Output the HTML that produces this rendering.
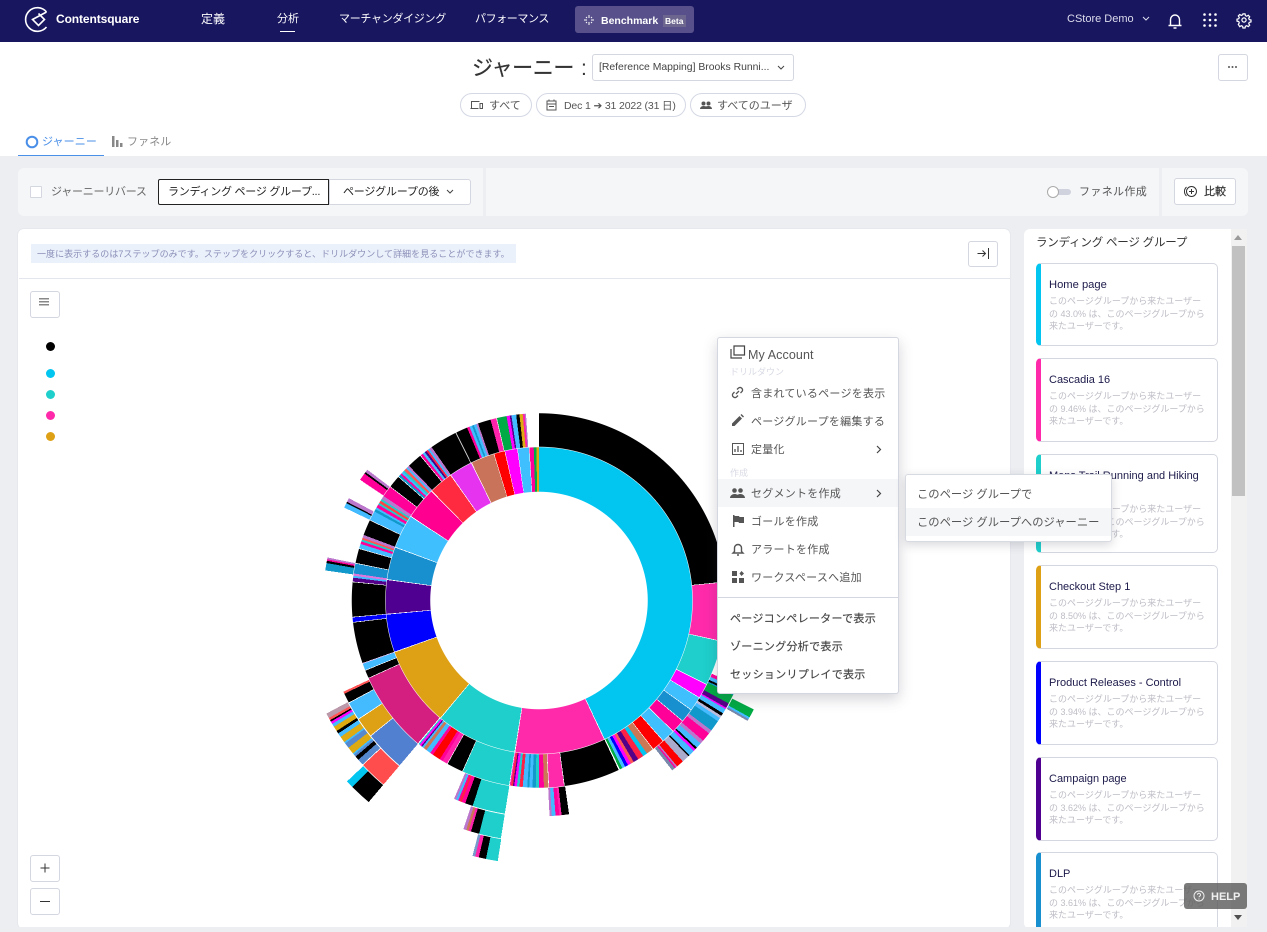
<!DOCTYPE html>
<html lang="ja"><head><meta charset="utf-8"><title>ジャーニー</title>
<style>
html,body{margin:0;padding:0;width:1267px;height:932px;overflow:hidden;background:#eceef2}
body{position:relative;font-family:"Liberation Sans","Noto Sans CJK JP",sans-serif;color:#444}
.a,.t{position:absolute}
.t{white-space:nowrap;line-height:16px}
.t,.mi,.mb,.card b,.card p{transform:translateY(1px)}
.btn{position:absolute;box-sizing:border-box;background:#fff;border:1px solid #d4d6e0;border-radius:3px}
.pill{position:absolute;box-sizing:border-box;top:93px;height:24px;background:#fff;border:1px solid #d4d8e4;border-radius:12px}
.nav{color:#fff;font-size:12px;top:10px}
.ring{position:absolute;border-radius:50%;transform:translateY(-.5px)}
.dot{position:absolute;left:46px;width:9px;height:9px;border-radius:50%}
.card{position:absolute;left:1036px;width:182px;box-sizing:border-box;background:#fff;border:1px solid #d4d6e0;border-left-width:5px;border-radius:5px}
.card b{position:absolute;left:8px;top:13px;font-weight:400;font-size:11px;line-height:14px;color:#1c1a4a;white-space:nowrap}
.card p{position:absolute;left:8px;margin:0;font-size:9px;line-height:12.5px;color:#bdbdc6;white-space:nowrap}
.mi{position:absolute;left:751px;font-size:11px;line-height:16px;color:#555;white-space:nowrap;letter-spacing:.25px}
.mb{position:absolute;left:730px;font-size:11px;line-height:16px;color:#444;white-space:nowrap;-webkit-text-stroke:.15px #444;letter-spacing:.3px}
svg{position:absolute;overflow:visible}
</style></head><body>

<!-- top nav -->
<div class="a" style="left:0;top:0;width:1267px;height:42px;background:#191660"></div>
<svg style="left:0;top:0" width="60" height="42" fill="none" stroke="#fff" stroke-width="1.6"><path d="M46.500 12A11.800 11.800 0 1 0 46.500 27"/><path d="M46.500 12L32.500 19.500 38.500 25.500 44.500 19.500 38.500 13.500"/></svg>
<div class="t" style="left:56px;top:10px;color:#fff;font-size:12px;font-weight:700;letter-spacing:-.1px">Contentsquare</div>
<div class="t nav" style="left:201px">定義</div>
<div class="t nav" style="left:277px;font-size:11px">分析</div>
<div class="a" style="left:280px;top:31px;width:15px;height:1px;background:#fff"></div>
<div class="t nav" style="left:339px;font-size:11px;letter-spacing:-.3px">マーチャンダイジング</div>
<div class="t nav" style="left:475px;font-size:11px;letter-spacing:-.4px">パフォーマンス</div>
<div class="a" style="left:575px;top:6px;width:119px;height:27px;background:#57508a;border-radius:3px"></div>
<svg style="left:583px;top:14px" width="12" height="12" stroke="#fff" stroke-width="1"><path d="M6 1v3M6 8v3M1 6h3M8 6h3M3 3l1 1M8 8l1 1M9 3L8 4M4 8L3 9"/></svg>
<div class="t" style="left:601px;top:12px;color:#fff;font-size:10.500px;font-weight:700">Benchmark</div>
<div class="a" style="left:663px;top:15px;width:23px;height:12px;background:#6d678f"></div>
<div class="t" style="left:665px;top:13px;color:#fff;font-size:8.5px;font-weight:700;line-height:14px">Beta</div>
<div class="t" style="left:1067px;top:10px;color:#dcdcec;font-size:11px">CStore Demo</div>
<svg style="left:1142px;top:16px" width="8" height="6" fill="none" stroke="#dcdcec"><path d="M1 1l3 3 3-3"/></svg>
<svg style="left:1167px;top:12px" width="16" height="18" fill="none" stroke="#fff" stroke-width="1.4"><path d="M3.500 13V7.500a4.500 4.500 0 0 1 9 0V13M1.500 13.500h13M6.500 16h3"/></svg>
<svg style="left:1203px;top:13px" width="14" height="14" fill="#fff"><circle cx="1.500" cy="1.500" r="1.300"/><circle cx="7" cy="1.500" r="1.300"/><circle cx="12.500" cy="1.500" r="1.300"/><circle cx="1.500" cy="7" r="1.300"/><circle cx="7" cy="7" r="1.300"/><circle cx="12.500" cy="7" r="1.300"/><circle cx="1.500" cy="12.500" r="1.300"/><circle cx="7" cy="12.500" r="1.300"/><circle cx="12.500" cy="12.500" r="1.300"/></svg>
<svg style="left:1237px;top:13px" width="14" height="14" viewBox="0 0 16 16" fill="none" stroke="#fff" stroke-width="1.4"><circle cx="8" cy="8" r="2.400"/><path d="M6.800 1h2.400l.4 2 1.500.7 1.800-1.100 1.600 1.700-1.100 1.700.6 1.500 2 .5v2.200l-2 .5-.6 1.500 1.100 1.700-1.600 1.700-1.800-1.100-1.500.7-.4 2H6.800l-.4-2-1.500-.7-1.800 1.100L1.500 13l1.100-1.700L2 9.800 0 9.300V7.100l2-.5.6-1.500L1.500 3.400l1.600-1.700 1.800 1.100 1.500-.7z"/></svg>

<!-- header -->
<div class="a" style="left:0;top:42px;width:1267px;height:114px;background:#fff"></div>
<div class="t" style="left:472px;top:54px;font-size:21px;line-height:28px;color:#333;-webkit-text-stroke:.2px #333;letter-spacing:-.4px">ジャーニー</div>
<div class="t" style="left:581px;top:54px;font-size:21px;line-height:28px;color:#333">:</div>
<div class="btn" style="left:592px;top:54px;width:202px;height:27px"></div>
<div class="t" style="left:599px;top:59px;font-size:10.400px;color:#444">[Reference Mapping] Brooks Runni...</div>
<svg style="left:777px;top:65px" width="8" height="6" fill="none" stroke="#444"><path d="M1 1l3 3 3-3"/></svg>
<div class="btn" style="left:1218px;top:54px;width:30px;height:27px"></div>
<svg style="left:1228px;top:66px" width="10" height="3" fill="#555"><circle cx="1" cy="1" r="1"/><circle cx="4.500" cy="1" r="1"/><circle cx="8" cy="1" r="1"/></svg>

<div class="pill" style="left:460px;width:72px"></div>
<svg style="left:470px;top:100px" width="13" height="10" fill="none" stroke="#555"><path d="M1.500 8V1.500h8M.5 8.500h8M10 3.500h2.500v5H10z"/></svg>
<div class="t" style="left:489px;top:97px;font-size:11px;color:#555">すべて</div>
<div class="pill" style="left:536px;width:150px"></div>
<svg style="left:546px;top:99px" width="11" height="12" fill="none" stroke="#555"><path d="M1 2h9v9H1zM1 5h9M3 .5v2M8 .5v2M3 7.500h5"/></svg>
<div class="t" style="left:564px;top:97px;font-size:10.500px;color:#555;letter-spacing:-.15px">Dec 1 ➔ 31 2022 (31 日)</div>
<div class="pill" style="left:690px;width:116px"></div>
<svg style="left:700px;top:101px" width="12" height="9" fill="#555"><circle cx="3.500" cy="2.500" r="2"/><circle cx="8.500" cy="2.500" r="2"/><path d="M0 8c0-2 2-3 3.500-3S6 5.500 6 5.500 7 5 8.500 5 12 6 12 8z"/></svg>
<div class="t" style="left:717px;top:97px;font-size:11px;color:#555">すべてのユーザ</div>

<svg style="left:25px;top:135px" width="14" height="14" fill="none"><circle cx="7" cy="7" r="5.300" stroke="#4a8fe8" stroke-width="2"/></svg>
<div class="t" style="left:42px;top:133px;font-size:11px;color:#4a8fe8;letter-spacing:.1px">ジャーニー</div>
<div class="a" style="left:18px;top:155px;width:86px;height:1px;background:#4a8fe8"></div>
<svg style="left:112px;top:136px" width="11" height="12" fill="#888"><path d="M0 0h2.500v11H0zM4 4h2.500v7H4zM8 7h2.500v4H8z"/></svg>
<div class="t" style="left:127px;top:133px;font-size:11px;color:#8a8a8a;letter-spacing:.1px">ファネル</div>

<!-- toolbar -->
<div class="a" style="left:18px;top:168px;width:1230px;height:48px;background:#f5f6f8;border-radius:6px"></div>
<div class="a" style="left:483px;top:168px;width:3px;height:48px;background:#eceef2"></div>
<div class="a" style="left:1159px;top:168px;width:3px;height:48px;background:#eceef2"></div>
<div class="a" style="left:30px;top:186px;width:10px;height:10px;border:1px solid #d4d6e0;background:#fff;border-radius:1px"></div>
<div class="t" style="left:51px;top:183px;font-size:11px;color:#666;letter-spacing:-.25px">ジャーニーリバース</div>
<div class="btn" style="left:329px;top:179px;width:142px;height:26px;border-radius:0 3px 3px 0"></div>
<div class="btn" style="left:158px;top:179px;width:171px;height:26px;border-color:#222;border-radius:2px 0 0 2px"></div>
<div class="t" style="left:168px;top:183px;font-size:11px;color:#222;letter-spacing:-.25px">ランディング ページ グループ...</div>
<div class="t" style="left:343px;top:183px;font-size:11px;color:#222;letter-spacing:-.2px">ページグループの後</div>
<svg style="left:446px;top:189px" width="8" height="6" fill="none" stroke="#444"><path d="M1 1l3 3 3-3"/></svg>
<div class="a" style="left:1052px;top:189px;width:19px;height:6px;background:#d0d3de;border-radius:3px"></div>
<div class="a" style="left:1047px;top:186px;width:10px;height:10px;background:#fff;border:1px solid #aaa;border-radius:50%"></div>
<div class="t" style="left:1079px;top:183px;font-size:11px;color:#555;letter-spacing:.35px">ファネル作成</div>
<div class="btn" style="left:1174px;top:178px;width:62px;height:27px"></div>
<svg style="left:1183px;top:185px" width="15" height="13" fill="none" stroke="#333"><circle cx="8.500" cy="6.500" r="5"/><path d="M8.500 4v5M6 6.500h5M3.500 2a6 6 0 0 0 0 9"/></svg>
<div class="t" style="left:1204px;top:183px;font-size:11px;color:#333;-webkit-text-stroke:.2px #333">比較</div>

<!-- clip to bottom of panels -->
<div class="a" style="left:0;top:0;width:1267px;height:927px;overflow:hidden">

<!-- main panel -->
<div class="a" style="left:18px;top:229px;width:992px;height:700px;background:#fff;border-radius:6px;box-shadow:0 0 0 1px #e6e8ee"></div>
<div class="a" style="left:31px;top:244px;width:485px;height:19px;background:#ebf1fb"></div>
<div class="t" style="left:37px;top:245px;font-size:9px;color:#8b8fb8;letter-spacing:.04px">一度に表示するのは7ステップのみです。ステップをクリックすると、ドリルダウンして詳細を見ることができます。</div>
<div class="a" style="left:19px;top:278px;width:991px;height:1px;background:#e4e6ee"></div>
<div class="btn" style="left:968px;top:241px;width:30px;height:26px"></div>
<svg style="left:977px;top:247px" width="13" height="13" fill="none" stroke="#333"><path d="M.5 6.500h8M5.500 3.500l3 3-3 3M11.500 1v11"/></svg>
<div class="btn" style="left:30px;top:291px;width:30px;height:27px"></div>
<svg style="left:39px;top:298px" width="10" height="8" fill="#888"><path d="M0 0h10v1.500H0zM0 3h10v1.500H0zM0 6h10v1.500H0z"/></svg>
<div class="dot" style="top:342px;background:#000"></div>
<div class="dot" style="top:369px;background:#02c5f0"></div>
<div class="dot" style="top:390px;background:#1ecfcb"></div>
<div class="dot" style="top:411px;background:#ff2aaa"></div>
<div class="dot" style="top:432px;background:#dea015"></div>
<div class="btn" style="left:30px;top:855px;width:30px;height:27px"></div>
<svg style="left:40px;top:863px" width="10" height="10" stroke="#333"><path d="M5 .5v9M.5 5h9"/></svg>
<div class="btn" style="left:30px;top:888px;width:30px;height:27px"></div>
<div class="a" style="left:40px;top:901px;width:10px;height:1px;background:#333"></div>

<!-- sunburst -->
<div class="ring" style="left:275px;top:337px;width:528px;height:528px;background:conic-gradient(transparent 0 189deg,#1ecfcb 0 191.6deg,#000 0 193.2deg,#f2a 0 194deg,#79c 0 194.6deg,transparent 0 220.2deg,#000 0 225deg,#02c5f0 0 226.7deg,transparent 0 360deg);-webkit-mask:radial-gradient(circle,transparent 241.3px,#000 241.8px,#000 264px,transparent 264.5px);mask:radial-gradient(circle,transparent 241.3px,#000 241.8px,#000 264px,transparent 264.5px)"></div>
<div class="ring" style="left:298px;top:360px;width:482px;height:482px;background:conic-gradient(transparent 0 116.9deg,#0a4 0 119deg,#4bf 0 119.5deg,#78a 0 120deg,transparent 0 189.1deg,#1ecfcb 0 194.4deg,#000 0 196.4deg,#f2a 0 197deg,#c75 0 197.6deg,#b7c 0 198.3deg,transparent 0 220.2deg,#ff4c4c 0 226.9deg,#fff 0 227.1deg,#58c 0 228.6deg,#000 0 229.6deg,#58c 0 230.2deg,#4bf 0 230.6deg,#da1 0 232.3deg,#58c 0 233.6deg,#4bf 0 234deg,#da1 0 235.5deg,#4bf 0 236.5deg,#000 0 237.2deg,#da1 0 238.4deg,#4bf 0 239.2deg,#f0f 0 239.8deg,#000 0 240.2deg,#f55 0 240.8deg,#b9a 0 242deg,transparent 0 360deg);-webkit-mask:radial-gradient(circle,transparent 216.5px,#000 217px,#000 240.7px,transparent 241.2px);mask:radial-gradient(circle,transparent 216.5px,#000 217px,#000 240.7px,transparent 241.2px)"></div>
<div class="ring" style="left:323px;top:385px;width:432px;height:432px;background:conic-gradient(transparent 0 113deg,#f09 0 114deg,#4bf 0 115deg,#000 0 115.6deg,#19c 0 116deg,#0a4 0 118.5deg,#508 0 119.8deg,#f0f 0 120.2deg,#4bf 0 121.5deg,#000 0 122.3deg,#bbd 0 123deg,#4bf 0 124deg,#19c 0 127deg,#b7c 0 128deg,#f09 0 130.5deg,#b7c 0 131.5deg,#4bf 0 133deg,#000 0 133.5deg,#f0f 0 134.2deg,#4bf 0 135.8deg,#000 0 136.2deg,#aac 0 138.2deg,#f00 0 140.2deg,#b7c 0 140.6deg,#f09 0 141deg,#78a 0 141.9deg,transparent 0 172deg,#000 0 174deg,#f2a 0 174.6deg,#f09 0 175.6deg,#4bf 0 176.6deg,#b7c 0 177.2deg,transparent 0 189.1deg,#1ecfcb 0 197.9deg,#000 0 200deg,#f09 0 201deg,#f24 0 201.6deg,#f09 0 202deg,#4bf 0 202.6deg,#b7c 0 203.2deg,transparent 0 220.2deg,#5280d0 0 231.1deg,#fff 0 231.3deg,#dea015 0 236.6deg,#fff 0 236.8deg,#4bf 0 241.6deg,#fff 0 241.8deg,#000 0 244.4deg,#f55 0 245deg,transparent 0 278deg,#19c 0 280deg,#000 0 280.6deg,#f09 0 281deg,#b7c 0 281.5deg,transparent 0 295.5deg,#4bf 0 296.8deg,#000 0 297.2deg,#b7c 0 298.3deg,transparent 0 304deg,#f09 0 306deg,#000 0 306.5deg,#b7c 0 307.3deg,transparent 0 360deg);-webkit-mask:radial-gradient(circle,transparent 187.5px,#000 188px,#000 215.7px,transparent 216.2px);mask:radial-gradient(circle,transparent 187.5px,#000 188px,#000 215.7px,transparent 216.2px)"></div>
<div class="ring" style="left:351px;top:413px;width:376px;height:376px;background:conic-gradient(#000 0 84.2deg,#fff 0 84.4deg,#ff2aaa 0 102.5deg,#fff 0 102.7deg,#1ecfcb 0 116.5deg,#fff 0 116.7deg,#f0f 0 121.1deg,#fff 0 121.3deg,#40bfff 0 125.6deg,#fff 0 125.8deg,#1890d0 0 129.9deg,#fff 0 130.1deg,#f09 0 134.2deg,#fff 0 134.4deg,#40bfff 0 138.4deg,#fff 0 138.6deg,#f00 0 142.4deg,#fff 0 142.6deg,#c75 0 144.8deg,#02c5f0 0 146.2deg,#f24 0 148deg,#508 0 149.6deg,#f55 0 150.6deg,#f0f 0 151.6deg,#00f 0 152.6deg,#4bf 0 153.6deg,#0a4 0 154.4deg,#fff 0 154.8deg,#000 0 172.1deg,#fff 0 172.3deg,#ff2aaa 0 176.9deg,#fff 0 177.1deg,#c75 0 178.5deg,#f09 0 180deg,#2cc 0 181deg,#19c 0 182deg,#4bf 0 183deg,#19c 0 183.6deg,#4bf 0 185deg,#f24 0 186deg,#2cc 0 186.8deg,#f0f 0 187.6deg,#508 0 188deg,#f24 0 188.6deg,#f2a 0 189deg,#fff 0 189.2deg,#1ecfcb 0 204deg,#fff 0 204.2deg,#000 0 209.2deg,#fff 0 209.4deg,#f2a 0 211deg,#f09 0 212deg,#f00 0 214.5deg,#f09 0 215.5deg,#4bf 0 217deg,#c75 0 218deg,#4bf 0 218.6deg,#508 0 219deg,#f0f 0 219.6deg,#2cc 0 220deg,#fff 0 220.3deg,#d41f80 0 245.4deg,#fff 0 245.6deg,#000 0 248deg,#fff 0 248.2deg,#4bf 0 250.2deg,#d8c0f0 0 250.5deg,#000 0 263.2deg,#fff 0 263.4deg,#00f 0 264.8deg,#fff 0 265deg,#000 0 275.6deg,#fff 0 275.8deg,#508 0 277deg,#4bf 0 277.6deg,#d7d 0 278.3deg,#1890d0 0 281.4deg,#fff 0 281.6deg,#000 0 286deg,#fff 0 286.2deg,#4bf 0 287.6deg,#f09 0 288.4deg,#2cc 0 289deg,#f55 0 289.6deg,#b7c 0 290.5deg,#000 0 295.3deg,#fff 0 295.5deg,#4bf 0 298.4deg,#19c 0 299.2deg,#4bf 0 299.8deg,#f09 0 300.8deg,#2cc 0 301.4deg,#f44 0 302.2deg,#2cc 0 302.8deg,#b7c 0 303.9deg,#f09 0 307.3deg,#fff 0 307.5deg,#000 0 311.3deg,#fff 0 311.5deg,#19c 0 312.2deg,#f09 0 312.8deg,#4bf 0 313.4deg,#2cc 0 314deg,#f55 0 314.8deg,#4bf 0 315.4deg,#b7c 0 316deg,#000 0 320.6deg,#fff 0 320.8deg,#f09 0 321.6deg,#4bf 0 322.4deg,#408 0 323deg,#f24 0 323.6deg,#4bf 0 324.2deg,#b7c 0 325deg,#000 0 333.5deg,#ddd 0 333.8deg,#000 0 337.4deg,#f09 0 338.2deg,#4bf 0 339deg,#19c 0 339.6deg,#4bf 0 340.4deg,#b7c 0 341deg,#000 0 345deg,#f2a 0 346.8deg,#fff 0 347deg,#0a4 0 350deg,#f0f 0 351deg,#508 0 351.5deg,#4bf 0 353deg,#000 0 354deg,#da1 0 355deg,#f2a 0 355.6deg,#b7c 0 356deg,transparent 0 360deg);-webkit-mask:radial-gradient(circle,transparent 153.5px,#000 154px,#000 187px,transparent 187.5px);mask:radial-gradient(circle,transparent 153.5px,#000 154px,#000 187px,transparent 187.5px)"></div>
<div class="ring" style="left:385px;top:447px;width:308px;height:308px;background:conic-gradient(#02c5f0 0 154.6deg,#fff 0 154.9deg,#ff2aaa 0 188.9deg,#fff 0 189.2deg,#1ecfcb 0 219.8deg,#fff 0 220.1deg,#dea015 0 250.2deg,#fff 0 250.5deg,#00f 0 264.7deg,#fff 0 265deg,#4f0090 0 277.7deg,#fff 0 278deg,#1890d0 0 290.2deg,#fff 0 290.5deg,#40bfff 0 303.1deg,#fff 0 303.4deg,#ff0090 0 315.4deg,#fff 0 315.7deg,#ff2a40 0 324.7deg,#fff 0 325deg,#e633f0 0 333.7deg,#fff 0 334deg,#c9735a 0 342.8deg,#fff 0 343deg,#f00 0 347deg,#fff 0 347.2deg,#f0f 0 351.8deg,#fff 0 352deg,#40bfff 0 356.2deg,#fff 0 356.4deg,#f09 0 358deg,#0a4 0 359deg,#da1 0 360deg);-webkit-mask:radial-gradient(circle,transparent 108.5px,#000 109px,#000 153px,transparent 153.5px);mask:radial-gradient(circle,transparent 108.5px,#000 109px,#000 153px,transparent 153.5px)"></div>

<!-- right panel -->
<div class="a" style="left:1024px;top:229px;width:223px;height:700px;background:#fff;border-radius:6px 0 0 6px"></div>
<div class="a" style="left:1231px;top:229px;width:16px;height:700px;background:#f1f1f1"></div>
<div class="a" style="left:1232px;top:246px;width:13px;height:250px;background:#c1c1c1"></div>
<div class="a" style="left:1234px;top:235px;border:4px solid transparent;border-top:0;border-bottom:5px solid #9a9a9a"></div>
<div class="a" style="left:1234px;top:915px;border:4px solid transparent;border-bottom:0;border-top:5px solid #505050"></div>
<div class="t" style="left:1036px;top:234px;font-size:11.500px;color:#333;letter-spacing:-.2px">ランディング ページ グループ</div>

<div class="card" style="top:263px;height:83px;border-left-color:#02c5f0"><b style="font-size:11.200px">Home page</b><p style="top:30px">このページグループから来たユーザー<br>の 43.0% は、このページグループから<br>来たユーザーです。</p></div>
<div class="card" style="top:358px;height:84px;border-left-color:#ff2aaa"><b>Cascadia 16</b><p style="top:30px">このページグループから来たユーザー<br>の 9.46% は、このページグループから<br>来たユーザーです。</p></div>
<div class="card" style="top:454px;height:99px;border-left-color:#1ecfcb"><b>Mens Trail Running and Hiking<br>Shoes</b><p style="top:47px">このページグループから来たユーザー<br>の 8.97% は、このページグループから<br>来たユーザーです。</p></div>
<div class="card" style="top:565px;height:84px;border-left-color:#dea015"><b>Checkout Step 1</b><p style="top:30px">このページグループから来たユーザー<br>の 8.50% は、このページグループから<br>来たユーザーです。</p></div>
<div class="card" style="top:661px;height:84px;border-left-color:#00f"><b>Product Releases - Control</b><p style="top:30px">このページグループから来たユーザー<br>の 3.94% は、このページグループから<br>来たユーザーです。</p></div>
<div class="card" style="top:757px;height:84px;border-left-color:#4f0090"><b>Campaign page</b><p style="top:30px">このページグループから来たユーザー<br>の 3.62% は、このページグループから<br>来たユーザーです。</p></div>
<div class="card" style="top:852px;height:100px;border-left-color:#1890d0"><b>DLP</b><p style="top:30px">このページグループから来たユーザー<br>の 3.61% は、このページグループから<br>来たユーザーです。</p></div>
</div>

<!-- help -->
<div class="a" style="left:1184px;top:883px;width:63px;height:26px;background:rgba(90,90,90,.8);border-radius:3px"></div>
<svg style="left:1193px;top:890px" width="12" height="12" fill="none" stroke="#eee"><circle cx="6" cy="6" r="5"/><path d="M4.500 4.800a1.500 1.500 0 1 1 2.200 1.300c-.5.300-.7.600-.7 1.200M6 8.500v1"/></svg>
<div class="t" style="left:1211px;top:888px;color:#f0f0f0;font-size:11px;font-weight:700">HELP</div>

<!-- context menu -->
<div class="a" style="left:717px;top:337px;width:182px;height:357px;box-sizing:border-box;background:#fff;border:1px solid #d4d6e0;border-radius:3px;box-shadow:0 5px 14px rgba(60,60,80,.22)"></div>
<svg style="left:730px;top:345px" width="16" height="14" fill="none" stroke="#444" stroke-width="1.200"><path d="M4 1h10.500v9H4zM1 4v9h11"/></svg>
<div class="t" style="left:748px;top:346px;font-size:12.500px;color:#555;letter-spacing:.1px">My Account</div>
<div class="t" style="left:730px;top:363px;font-size:9px;color:#d8dae4">ドリルダウン</div>

<svg style="left:731px;top:386px" width="13" height="13" fill="none" stroke="#555" stroke-width="1.300"><path d="M5 8l3-3M3.500 6L2 7.500a2.500 2.500 0 0 0 3.500 3.500L7 9.500M6 3.500L7.500 2a2.500 2.500 0 0 1 3.500 3.500L9.500 7"/></svg>
<div class="mi" style="top:385px">含まれているページを表示</div>
<svg style="left:731px;top:414px" width="13" height="13" fill="#555"><path d="M1 9.500L8.500 2l2.500 2.500L3.500 12H1zM9.500 1l1-1 2.500 2.500-1 1z"/></svg>
<div class="mi" style="top:413px">ページグループを編集する</div>
<svg style="left:732px;top:443px" width="12" height="12" fill="none" stroke="#555"><path d="M.5.5h11v11H.5z"/><path d="M3 9V6M6 9V3M9 9V7" stroke-width="1.300"/></svg>
<div class="mi" style="top:441px">定量化</div>
<svg style="left:876px;top:445px" width="6" height="9" fill="none" stroke="#444" stroke-width="1.200"><path d="M1 1l3.500 3.500L1 8"/></svg>
<div class="t" style="left:730px;top:464px;font-size:9px;color:#d8dae4">作成</div>

<div class="a" style="left:718px;top:479px;width:180px;height:28px;background:#f5f6f8"></div>
<svg style="left:730px;top:488px" width="15" height="10" fill="#555"><circle cx="4.500" cy="2.500" r="2.300"/><circle cx="10.500" cy="2.500" r="2.300"/><path d="M0 10c0-2.500 2.500-4 4.500-4 1.200 0 2.200.3 3 .8.800-.5 1.800-.8 3-.8 2 0 4.500 1.500 4.500 4z"/></svg>
<div class="mi" style="top:485px">セグメントを作成</div>
<svg style="left:876px;top:489px" width="6" height="9" fill="none" stroke="#444" stroke-width="1.200"><path d="M1 1l3.500 3.500L1 8"/></svg>
<svg style="left:733px;top:515px" width="11" height="12" fill="#555"><path d="M0 0h1.500v12H0zM1.500 1H6l.5 1H11v6H6l-.5-1h-4z"/></svg>
<div class="mi" style="top:513px">ゴールを作成</div>
<svg style="left:732px;top:542px" width="12" height="14" fill="none" stroke="#555" stroke-width="1.400"><path d="M2.500 9.500V6a3.500 3.500 0 0 1 7 0v3.500l1.500 1.500H1zM5 13h2"/></svg>
<div class="mi" style="top:541px">アラートを作成</div>
<svg style="left:732px;top:571px" width="12" height="12" fill="#555"><path d="M0 0h5v5H0zM0 7h5v5H0zM7 7h5v5H7zM7.500 2.500L9.500 0l2.500 2.500-2.500 2.500z"/></svg>
<div class="mi" style="top:569px">ワークスペースへ追加</div>
<div class="a" style="left:718px;top:597px;width:180px;height:1px;background:#d4d6e0"></div>
<div class="mb" style="top:610px">ページコンペレーターで表示</div>
<div class="mb" style="top:638px">ゾーニング分析で表示</div>
<div class="mb" style="top:666px">セッションリプレイで表示</div>

<!-- submenu -->
<div class="a" style="left:905px;top:474px;width:207px;height:68px;box-sizing:border-box;background:#fff;border:1px solid #d8dae2;border-radius:3px;box-shadow:0 3px 10px rgba(60,60,80,.2)"></div>
<div class="a" style="left:906px;top:508px;width:205px;height:28px;background:#f5f6f8"></div>
<div class="t" style="left:917px;top:486px;font-size:11.300px;color:#555">このページ グループで</div>
<div class="t" style="left:917px;top:514px;font-size:11.300px;color:#555">このページ グループへのジャーニー</div>
</body></html>
